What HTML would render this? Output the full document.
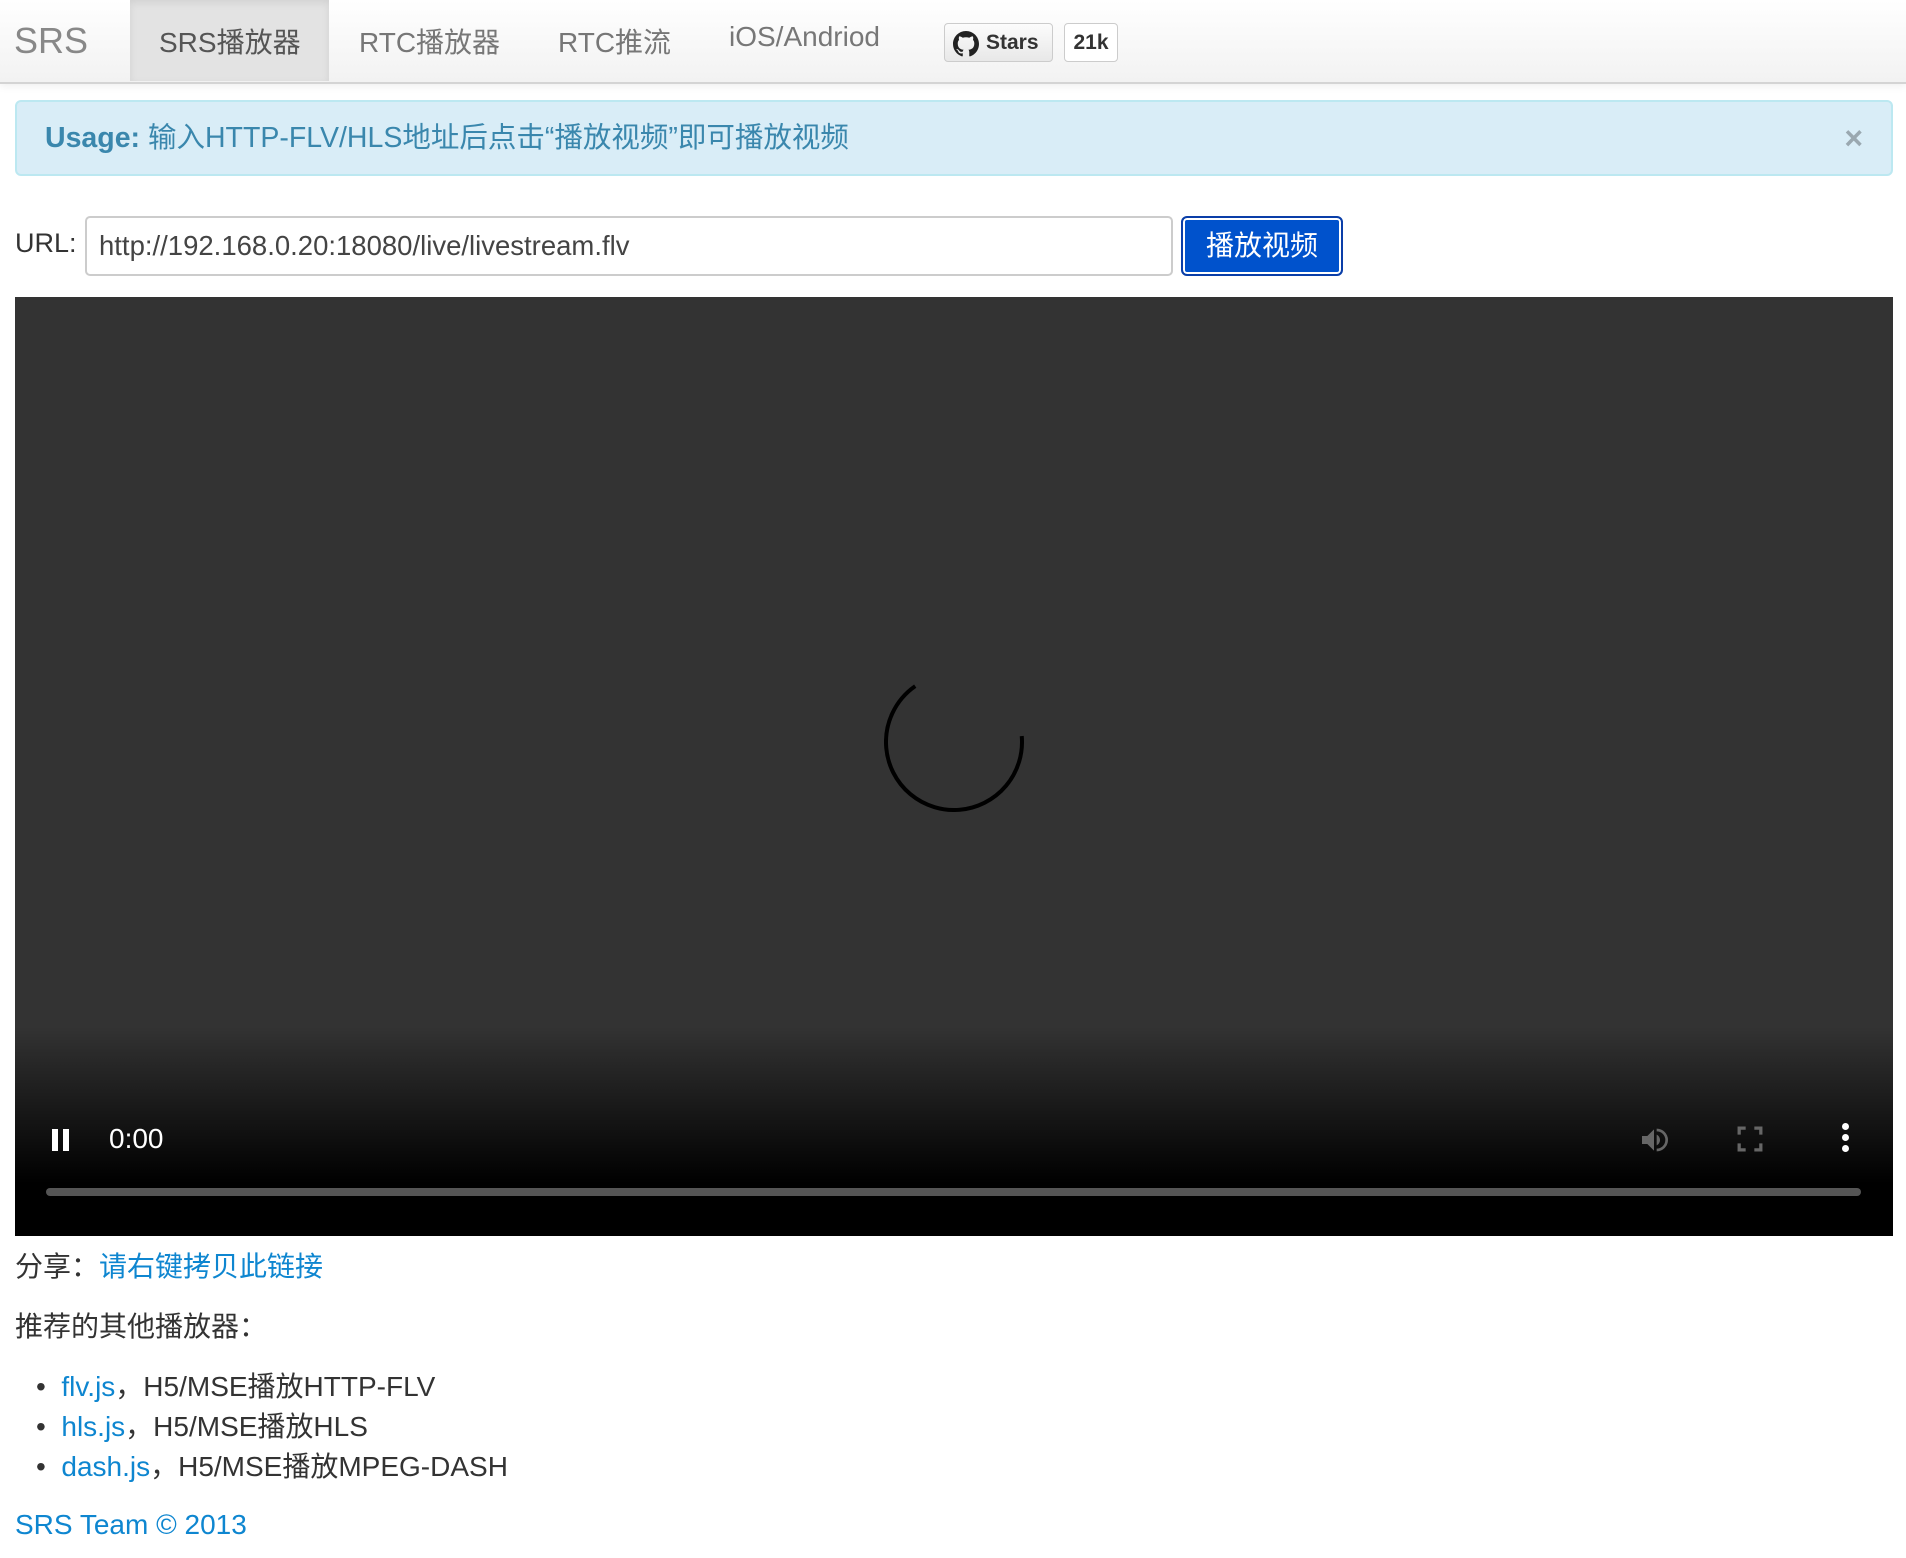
<!DOCTYPE html>
<html><head><meta charset="utf-8"><style>
*{margin:0;padding:0;box-sizing:border-box}
body{width:1906px;height:1558px;background:#fff;font-family:"Liberation Sans","Noto Sans CJK SC",sans-serif;color:#333;position:relative;overflow:hidden}
.nav{position:absolute;left:0;top:0;width:1906px;height:84px;background:linear-gradient(#fff,#f2f2f2);border-bottom:2px solid #d4d4d4;box-shadow:0 2px 8px rgba(0,0,0,.07)}
.nav span{position:absolute;top:21px;font-size:28px;color:#777}
.brand{left:14px;font-size:36px!important;top:20px!important;color:#888!important;font-weight:300}
.active{position:absolute;left:130px;top:0;width:199px;height:81px;background:#e3e3e3;box-shadow:inset 0 3px 8px rgba(0,0,0,.08)}
.gh{position:absolute;top:23px;height:39px;border:1px solid #ccc;border-radius:4px;font-size:21px;font-weight:bold;color:#333;line-height:37px}
.alert{position:absolute;left:15px;top:100px;width:1878px;height:76px;background:#d9edf7;border:2px solid #bce8f1;border-radius:6px;color:#3a87ad;font-size:28.5px;line-height:72px;padding-left:28px}
.close{position:absolute;right:28px;top:0;color:#9aa8b0;font-size:32px;font-weight:bold}
.url{position:absolute;left:15px;top:228px;font-size:27px}
.inp{position:absolute;left:85px;top:216px;width:1088px;height:60px;border:2px solid #ccc;border-radius:5px;font-size:27.5px;line-height:56px;padding-left:12px;color:#444}
.btn{position:absolute;left:1181px;top:216px;width:162px;height:60px;border:2px solid #0a3ea8;border-radius:6px;background:#0052cc;box-shadow:inset 0 0 0 2px #fff;color:#fff;font-size:28px;line-height:56px;text-align:center}
.video{position:absolute;left:15px;top:297px;width:1878px;height:939px;background:#333}
.grad{position:absolute;left:0;bottom:0;width:100%;height:210px;background:linear-gradient(rgba(0,0,0,0),#000 75%)}
.t{position:absolute;font-size:28px}
a{color:#0e86d0}
</style></head><body>
<div class="nav">
<div class="active"></div>
<span class="brand">SRS</span>
<span style="left:159px;color:#555">SRS播放器</span>
<span style="left:359px">RTC播放器</span>
<span style="left:558px">RTC推流</span>
<span style="left:729px">iOS/Andriod</span>
<div class="gh" style="left:944px;width:109px;background:linear-gradient(#fcfcfc,#e8e8e8);padding-left:41px">Stars
<svg style="position:absolute;left:8px;top:7px" width="26" height="26" viewBox="0 0 16 16"><path fill="#222" d="M8 0C3.58 0 0 3.58 0 8c0 3.540 2.290 6.530 5.470 7.590.4.07.55-.17.55-.38 0-.19-.01-.82-.01-1.490-2.010.37-2.530-.49-2.690-.94-.09-.23-.48-.94-.82-1.130-.28-.15-.68-.52-.01-.53.63-.01 1.080.58 1.230.82.72 1.210 1.870.87 2.330.66.07-.52.28-.87.51-1.070-1.780-.2-3.640-.89-3.640-3.950 0-.87.31-1.590.82-2.150-.08-.2-.36-1.020.08-2.120 0 0 .67-.21 2.200.82.64-.18 1.320-.27 2-.27.68 0 1.360.09 2 .27 1.530-1.040 2.200-.82 2.200-.82.44 1.100.16 1.920.08 2.120.51.56.82 1.270.82 2.150 0 3.070-1.870 3.750-3.650 3.950.29.25.54.73.54 1.480 0 1.070-.01 1.930-.01 2.200 0 .21.15.46.55.38A8.013 8.013 0 0016 8c0-4.420-3.580-8-8-8z"/></svg></div>
<div class="gh" style="left:1064px;width:54px;background:#fff;text-align:center">21k</div>
</div>
<div class="alert"><b>Usage:</b> 输入HTTP-FLV/HLS地址后点击“播放视频”即可播放视频<span class="close">×</span></div>
<div class="url">URL:</div>
<div class="inp">http://192.168.0.20:18080/live/livestream.flv</div>
<div class="btn">播放视频</div>
<div class="video">
<svg style="position:absolute;left:869px;top:375px" width="140" height="140" viewBox="0 0 140 140"><circle cx="70" cy="70" r="68" fill="none" stroke="#000" stroke-width="4" stroke-dasharray="285 1000" transform="rotate(-5 70 70)"/></svg>
<div class="grad"></div>
<div style="position:absolute;left:37px;top:832px;width:6px;height:22px;background:#fff"></div>
<div style="position:absolute;left:48px;top:832px;width:6px;height:22px;background:#fff"></div>
<div style="position:absolute;left:94px;top:826px;color:#fff;font-size:28px">0:00</div>
<svg style="position:absolute;left:1623px;top:827px" width="32" height="32" viewBox="0 0 24 24"><path fill="#666" d="M3 9v6h4l5 5V4L7 9H3zm13.5 3c0-1.77-1-3.29-2.5-4.03v8.05c1.5-.73 2.5-2.25 2.5-4.02z"/><path fill="none" stroke="#666" stroke-width="2" d="M14 4.5a7.5 7.5 0 010 15"/></svg>
<svg style="position:absolute;left:1722px;top:829px" width="26" height="26" viewBox="0 0 24 24" fill="none" stroke="#666" stroke-width="3"><path d="M2 8V2h6M16 2h6v6M22 16v6h-6M8 22H2v-6"/></svg>
<div style="position:absolute;left:1827px;top:826px;width:7px;height:7px;border-radius:50%;background:#fff;box-shadow:0 11px 0 #fff,0 22px 0 #fff"></div>
<div style="position:absolute;left:31px;top:891px;width:1815px;height:8px;border-radius:4px;background:#555"></div>
</div>
<div class="t" style="left:15px;top:1245px">分享：<a>请右键拷贝此链接</a></div>
<div class="t" style="left:15px;top:1305px">推荐的其他播放器：</div>
<div class="t" style="left:36px;top:1365px">•&nbsp; <a>flv.js</a>，H5/MSE播放HTTP-FLV</div>
<div class="t" style="left:36px;top:1405px">•&nbsp; <a>hls.js</a>，H5/MSE播放HLS</div>
<div class="t" style="left:36px;top:1445px">•&nbsp; <a>dash.js</a>，H5/MSE播放MPEG-DASH</div>
<div class="t" style="left:15px;top:1509px;color:#0e86d0">SRS Team © 2013</div>
</body></html>
